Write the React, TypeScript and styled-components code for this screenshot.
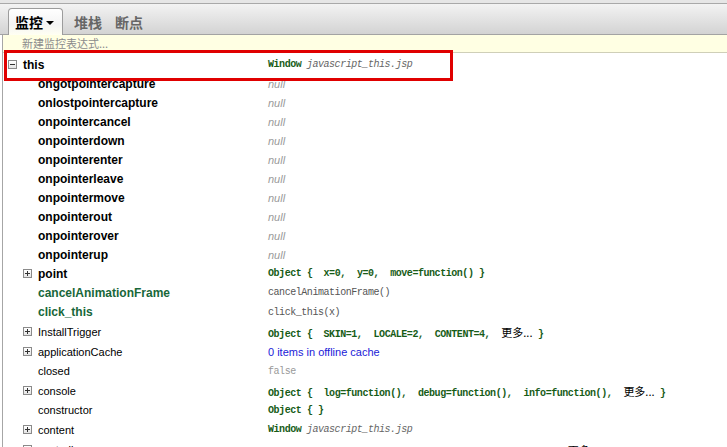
import React from 'react';
import styled, { createGlobalStyle } from 'styled-components';

const GlobalStyle = createGlobalStyle`
  html, body {
    margin: 0;
    padding: 0;
    background: #ffffff;
    width: 727px;
    height: 447px;
    overflow: hidden;
  }
  body {
    font-family: "Liberation Sans", Arial, "Noto Sans CJK SC", sans-serif;
  }
`;

const Shell = styled.div`
  position: relative;
  width: 727px;
  height: 447px;
  overflow: hidden;
`;

const TopStrip = styled.div`
  height: 3px;
  background: #e6e6e6;
`;

const Toolbar = styled.div`
  height: 30px;
  border-top: 1px solid #a9a9a9;
  border-bottom: 1px solid #a3a3a3;
  background: linear-gradient(#f3f3f3, #d3d3d3);
  display: flex;
  align-items: flex-end;
  padding-left: 8px;
  gap: 9px;
`;

const Tab = styled.div<{ $active?: boolean }>`
  height: 26px;
  margin-bottom: -1px;
  display: flex;
  align-items: center;
  gap: 3px;
  padding: 0 ${(p) => (p.$active ? '8px 0 6px' : '2px')};
  font-family: "Noto Sans CJK SC", sans-serif;
  font-size: 14px;
  font-weight: bold;
  color: ${(p) => (p.$active ? '#000' : '#666')};
  box-sizing: border-box;
  ${(p) =>
    p.$active
      ? `
    background: linear-gradient(#ffffff, #f4f4f4 60%, #fffff2);
    border: 1px solid #9c9c9c;
    border-bottom: none;
    border-radius: 4px 4px 0 0;
    height: 27px;
  `
      : ''}
`;

const Caret = styled.span`
  width: 0;
  height: 0;
  margin-top: 2px;
  border-left: 4px solid transparent;
  border-right: 4px solid transparent;
  border-top: 4px solid #000;
`;

const Panel = styled.div`
  margin-left: 2px;
  border-left: 1px solid #a6a6a6;
`;

const NewWatch = styled.div`
  height: 17px;
  background: #ffffe3;
  border-bottom: 1px solid #cfcfb8;
  padding-left: 19px;
  font-family: "Noto Sans CJK SC", sans-serif;
  font-size: 11px;
  line-height: 17px;
  color: #8c8c8c;
`;

const List = styled.div`
  padding-top: 2px;
`;

const Row = styled.div<{ $tall?: boolean }>`
  display: flex;
  align-items: center;
  height: ${(p) => (p.$tall ? '19.6px' : '19px')};
`;

const NameCell = styled.div<{ $level: number }>`
  width: ${(p) => 268 - (8 + 15 * p.$level)}px;
  padding-left: ${(p) => 5 + 15 * p.$level}px;
  display: flex;
  align-items: center;
  flex-shrink: 0;
`;

const Toggle = styled.span<{ $hidden?: boolean }>`
  width: 9px;
  height: 9px;
  box-sizing: border-box;
  border: 1px solid ${(p) => (p.$hidden ? 'transparent' : '#8a8a8a')};
  background: ${(p) => (p.$hidden ? 'transparent' : 'linear-gradient(#ffffff, #e4e4e4)')};
  margin-right: 6px;
  position: relative;
  flex-shrink: 0;
`;

const ToggleBar = styled.span<{ $vertical?: boolean }>`
  position: absolute;
  background: #333;
  ${(p) =>
    p.$vertical
      ? 'left: 3px; top: 1px; width: 1px; height: 5px;'
      : 'left: 1px; top: 3px; width: 5px; height: 1px;'}
`;

type NameKind = 'bold' | 'plain' | 'func';

const Name = styled.span<{ $kind: NameKind }>`
  font-size: ${(p) => (p.$kind === 'plain' ? '11px' : '12px')};
  font-weight: ${(p) => (p.$kind === 'plain' ? 'normal' : 'bold')};
  color: ${(p) => (p.$kind === 'func' ? '#18673a' : '#000')};
  white-space: nowrap;
`;

const ValueCell = styled.div`
  display: flex;
  align-items: center;
  white-space: pre;
`;

const Null = styled.span`
  font-size: 11px;
  font-style: italic;
  color: #9a9a9a;
`;

const Mono = styled.span<{ $color?: string; $bold?: boolean; $italic?: boolean }>`
  font-family: "Liberation Mono", "Courier New", "Noto Sans CJK SC", monospace;
  font-size: 10px;
  letter-spacing: -0.45px;
  color: ${(p) => p.$color || '#555'};
  font-weight: ${(p) => (p.$bold ? 'bold' : 'normal')};
  font-style: ${(p) => (p.$italic ? 'italic' : 'normal')};
`;

const More = styled.span`
  font-family: "Noto Sans CJK SC", sans-serif;
  font-size: 11px;
  letter-spacing: 0;
  font-weight: normal;
  color: #000;
`;

const Blue = styled.span`
  font-size: 11px;
  color: #1a1ad8;
`;

const Highlight = styled.div`
  position: absolute;
  left: 4px;
  top: 50px;
  width: 449px;
  height: 31px;
  box-sizing: border-box;
  border: 3px solid #e00000;
  pointer-events: none;
`;

const GREEN = '#175c17';

const WindowValue = () => (
  <>
    <Mono $bold $color={GREEN}>Window </Mono>
    <Mono $italic $color="#666">javascript_this.jsp</Mono>
  </>
);

const ObjectValue: React.FC<{ label?: string; parts: string[]; more?: boolean }> = ({
  label = 'Object',
  parts,
  more,
}) => (
  <Mono $bold $color={GREEN}>
    {label} {'{ '}
    {parts.map((p, i) => (
      <React.Fragment key={i}>
        {' '}
        {p}
        {i < parts.length - 1 || more ? ', ' : ''}
      </React.Fragment>
    ))}
    {more && (
      <>
        {' '}
        <More>更多...</More>
      </>
    )}
    {parts.length ? ' }' : '}'}
  </Mono>
);

interface Item {
  name: string;
  level: number;
  kind: NameKind;
  toggle?: 'plus' | 'minus';
  value: React.ReactNode;
  tall?: boolean;
}

const nullNames = [
  'ongotpointercapture',
  'onlostpointercapture',
  'onpointercancel',
  'onpointerdown',
  'onpointerenter',
  'onpointerleave',
  'onpointermove',
  'onpointerout',
  'onpointerover',
  'onpointerup',
];

const items: Item[] = [
  { name: 'this', level: 0, kind: 'bold', toggle: 'minus', value: <WindowValue /> },
  ...nullNames.map((n) => ({ name: n, level: 1, kind: 'bold' as NameKind, value: <Null>null</Null> })),
  {
    name: 'point',
    level: 1,
    kind: 'bold',
    toggle: 'plus',
    value: <ObjectValue parts={['x=0', 'y=0', 'move=function()']} />,
  },
  { name: 'cancelAnimationFrame', level: 1, kind: 'func', value: <Mono>cancelAnimationFrame()</Mono>, tall: true },
  { name: 'click_this', level: 1, kind: 'func', value: <Mono>click_this(x)</Mono>, tall: true },
  {
    name: 'InstallTrigger',
    level: 1,
    kind: 'plain',
    toggle: 'plus',
    value: <ObjectValue parts={['SKIN=1', 'LOCALE=2', 'CONTENT=4']} more />,
    tall: true,
  },
  {
    name: 'applicationCache',
    level: 1,
    kind: 'plain',
    toggle: 'plus',
    value: <Blue>0 items in offline cache</Blue>,
    tall: true,
  },
  { name: 'closed', level: 1, kind: 'plain', value: <Mono $color="#999">false</Mono>, tall: true },
  {
    name: 'console',
    level: 1,
    kind: 'plain',
    toggle: 'plus',
    value: <ObjectValue parts={['log=function()', 'debug=function()', 'info=function()']} more />,
    tall: true,
  },
  { name: 'constructor', level: 1, kind: 'plain', value: <ObjectValue parts={[]} />, tall: true },
  { name: 'content', level: 1, kind: 'plain', toggle: 'plus', value: <WindowValue />, tall: true },
  {
    name: 'controllers',
    level: 1,
    kind: 'plain',
    toggle: 'plus',
    value: <ObjectValue label="XULControllers" parts={['0=XULController', '1=XULController']} more />,
    tall: true,
  },
];

const App: React.FC = () => {
  return (
    <Shell>
      <GlobalStyle />
      <TopStrip />
      <Toolbar>
        <Tab $active>
          监控
          <Caret />
        </Tab>
        <Tab>堆栈</Tab>
        <Tab>断点</Tab>
      </Toolbar>
      <Panel>
        <NewWatch>新建监控表达式...</NewWatch>
        <List>
          {items.map((it) => (
            <Row key={it.name} $tall={it.tall}>
              <NameCell $level={it.level}>
                <Toggle $hidden={!it.toggle}>
                  {it.toggle && <ToggleBar />}
                  {it.toggle === 'plus' && <ToggleBar $vertical />}
                </Toggle>
                <Name $kind={it.kind}>{it.name}</Name>
              </NameCell>
              <ValueCell>{it.value}</ValueCell>
            </Row>
          ))}
        </List>
      </Panel>
      <Highlight />
    </Shell>
  );
};

export default App;
